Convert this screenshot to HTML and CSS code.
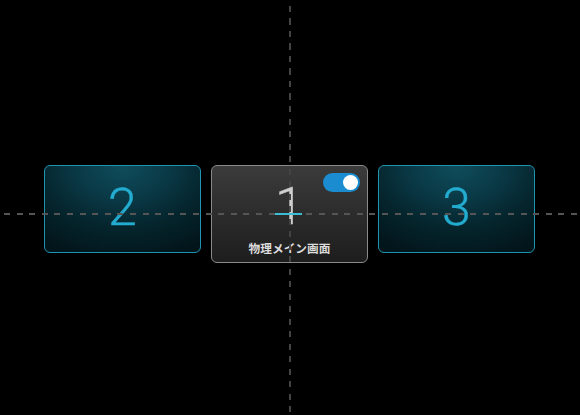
FILE: index.html
```html
<!DOCTYPE html>
<html lang="ja">
<head>
<meta charset="utf-8">
<title>Display arrangement</title>
<link rel="stylesheet" href="styles.css">
</head>
<body>
<main class="stage">
  <div class="row">
    <div class="card card-secondary">
      <div class="num">2</div>
    </div>
    <div class="card card-primary">
      <span class="toggle"><span class="knob"></span></span>
      <div class="num">1</div>
      <div class="label">物理メイン画面</div>
    </div>
    <div class="card card-secondary">
      <div class="num">3</div>
    </div>
  </div>
  <div class="guide guide-v"></div>
  <div class="guide guide-h"></div>
  <div class="center-mark"></div>
</main>
</body>
</html>
```
FILE: styles.css
```css
html, body {
  margin: 0;
  padding: 0;
  background: #000;
}
.stage {
  position: relative;
  width: 580px;
  height: 415px;
  overflow: hidden;
  background: #000;
  font-family: Roboto, "Noto Sans", "Noto Sans CJK JP", sans-serif;
}
.row {
  display: flex;
  align-items: flex-start;
  justify-content: flex-start;
  gap: 10px;
  padding-top: 165px;
  padding-left: 44px;
}
.card {
  position: relative;
  box-sizing: border-box;
  width: 157px;
  border-radius: 6px;
  display: flex;
  flex-direction: column;
  align-items: center;
  padding-top: 15px;
}
.card-secondary {
  height: 88px;
  border: 1px solid #1e94b0;
  background: radial-gradient(ellipse 85% 110% at 50% 0%, #0f4d5c 0%, #0a3946 35%, #05252d 65%, #02151a 100%);
}
.card-primary {
  height: 98px;
  border: 1px solid #8a8a8a;
  background: linear-gradient(#3b3b3b 0%, #2c2c2c 50%, #1d1d1d 100%);
}
.num {
  font-size: 52px;
  line-height: 52px;
  font-weight: 300;
  height: 52px;
  -webkit-text-stroke: 0.4px currentColor;
}
.card-secondary .num {
  color: #23acd0;
  margin-top: 1px;
}
.card-primary .num {
  color: #cfcfcf;
}
.label {
  margin-top: 7px;
  font-family: "Noto Sans CJK JP", sans-serif;
  font-size: 11.7px;
  line-height: 16px;
  font-weight: 700;
  color: #dcdcdc;
}
.toggle {
  position: absolute;
  top: 7px;
  right: 7px;
  width: 37px;
  height: 19px;
  border-radius: 10px;
  background: #1a8ccf;
  display: flex;
  align-items: center;
  justify-content: flex-end;
  padding-right: 2px;
  box-sizing: border-box;
}
.knob {
  width: 15px;
  height: 15px;
  border-radius: 50%;
  background: #fff;
}
.guide {
  position: absolute;
  z-index: 2;
}
.guide-v {
  left: 289px;
  top: 0;
  width: 2px;
  height: 415px;
  background: repeating-linear-gradient(to bottom, transparent 0, transparent 6px, #434343 6px, #434343 12.5px);
}
.guide-h {
  left: 0;
  top: 213px;
  width: 580px;
  height: 2px;
  background: repeating-linear-gradient(to right, transparent 0, transparent 4px, #555 4px, #555 10px, transparent 10px, transparent 12.6px);
}
.center-mark {
  position: absolute;
  z-index: 3;
  left: 275px;
  top: 213px;
  width: 27px;
  height: 2px;
  background: #3bbdd6;
}
```
